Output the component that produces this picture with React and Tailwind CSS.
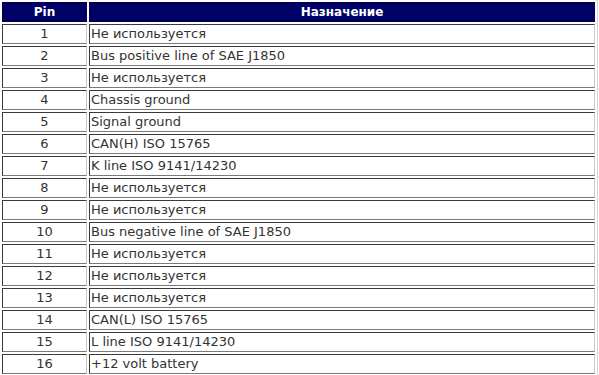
import React from "react";

const rows = [
  ["1", "Не используется"],
  ["2", "Bus positive line of SAE J1850"],
  ["3", "Не используется"],
  ["4", "Chassis ground"],
  ["5", "Signal ground"],
  ["6", "CAN(H) ISO 15765"],
  ["7", "K line ISO 9141/14230"],
  ["8", "Не используется"],
  ["9", "Не используется"],
  ["10", "Bus negative line of SAE J1850"],
  ["11", "Не используется"],
  ["12", "Не используется"],
  ["13", "Не используется"],
  ["14", "CAN(L) ISO 15765"],
  ["15", "L line ISO 9141/14230"],
  ["16", "+12 volt battery"],
];

const cell =
  "h-[20px] p-0 border border-t-[#3a3a3a] border-l-[#3a3a3a] border-b-[#7a7a7a] border-r-[#c8c8c8] text-[13px] leading-[18px] text-[#333]";

export default function App() {
  return (
    <div className="w-[599px] h-[375px] bg-white overflow-hidden" style={{ fontFamily: '"DejaVu Sans", Verdana, sans-serif' }}>
      <table className="w-[598px] border-separate border-spacing-[2px] table-fixed border-r border-r-[#d4d4d4]">
        <colgroup>
          <col className="w-[85px]" />
          <col />
        </colgroup>
        <thead>
          <tr>
            <th className="h-[18px] p-0 bg-[#000066] text-white text-[12px] font-bold leading-[18px] text-center border border-[#000044]">Pin</th>
            <th className="h-[18px] p-0 bg-[#000066] text-white text-[12px] font-bold leading-[18px] text-center border border-[#000044]">Назначение</th>
          </tr>
        </thead>
        <tbody>
          {rows.map(([pin, desc]) => (
            <tr key={pin}>
              <td className={cell + " text-center"}>{pin}</td>
              <td className={cell + " text-left pl-px"}>{desc}</td>
            </tr>
          ))}
        </tbody>
      </table>
    </div>
  );
}
